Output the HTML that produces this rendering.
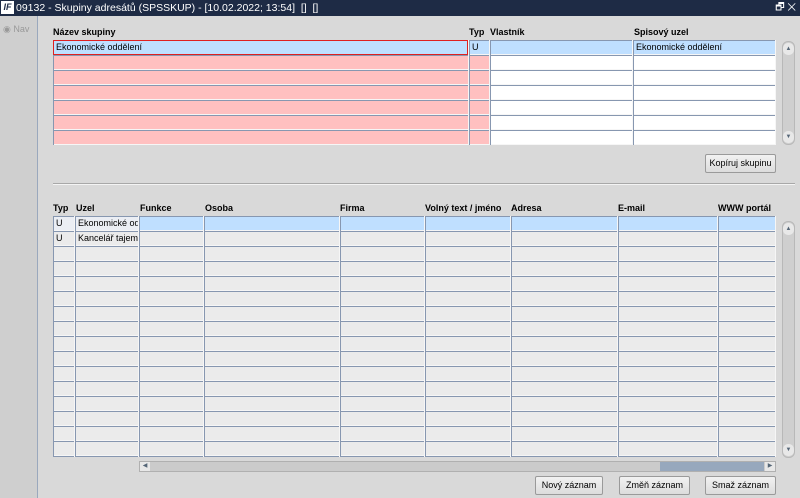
<!DOCTYPE html>
<html><head><meta charset="utf-8"><style>
*{margin:0;padding:0;box-sizing:border-box}
body{width:800px;height:498px;background:#d9d9d9;font-family:"Liberation Sans",Arial,sans-serif;font-size:9px;color:#000;position:relative;overflow:hidden}
.a{position:absolute}
#title{left:0;top:0;width:800px;height:16px;background:#1e2b45;color:#fff;font-size:10.5px;line-height:16px;padding-left:16px}
#left{left:0;top:16px;width:38px;height:482px;background:#cfcfcf;border-right:1px solid #9aa8bd}
.h{font-weight:bold;font-size:9px}
.col{background:repeating-linear-gradient(to bottom,#8797b0 0 1px,var(--f) 1px 14px,#f6f6f6 14px 15px);border-left:1px solid #8797b0;border-right:1px solid #f6f6f6}
.c1{position:absolute;left:0;top:0;right:0;height:15px;border-top:1px solid #8797b0;border-bottom:1px solid #f6f6f6;background:#bfdfff;padding-left:2px;line-height:13px;white-space:nowrap;overflow:hidden}
.btn{background:linear-gradient(#f2f2f2,#dcdcdc);border:1px solid #9a9a9a;border-radius:2px;text-align:center;line-height:17px;font-size:9px}
.vs{background:#cfcfcf;border:1px solid #b8b8b8;border-radius:6px}
.ar{position:absolute;left:0;width:11px;height:12px;background:#e8e8e8;border-radius:5px;font-size:6px;line-height:12px;text-align:center;color:#567}
</style></head><body>
<div class="a" id="title"><span class="a" style="left:1px;top:1px;width:13px;height:13px;background:#fff;color:#1e2b45;font-size:9px;font-weight:bold;font-style:italic;line-height:13px;text-align:center">IF</span>09132 - Skupiny adresátů (SPSSKUP) - [10.02.2022; 13:54]&nbsp; []&nbsp; []<span class="a" style="right:4px;top:0;font-size:10px">🗗 ✕</span></div>
<div class="a" id="left"><span class="a" style="left:3px;top:8px;color:#999;font-size:9px">◉ Nav</span></div>

<div class="a h" style="left:53px;top:27px">Název skupiny</div>
<div class="a h" style="left:469px;top:27px">Typ</div>
<div class="a h" style="left:490px;top:27px">Vlastník</div>
<div class="a h" style="left:634px;top:27px">Spisový uzel</div>

<div class="a col" style="left:53px;top:40px;width:416px;height:105px;--f:#ffc0c0"><div class="c1" style="border:1px solid #e02020;left:-1px">Ekonomické oddělení</div></div>
<div class="a col" style="left:469px;top:40px;width:21px;height:105px;--f:#ffc0c0"><div class="c1">U</div></div>
<div class="a col" style="left:490px;top:40px;width:143px;height:105px;--f:#fff"><div class="c1"></div></div>
<div class="a col" style="left:633px;top:40px;width:143px;height:105px;--f:#fff"><div class="c1">Ekonomické oddělení</div></div>
<div class="a vs" style="left:782px;top:41px;width:13px;height:104px"><div class="ar" style="top:1px">▲</div><div class="ar" style="bottom:1px">▼</div></div>

<div class="a btn" style="left:705px;top:154px;width:71px;height:19px">Kopíruj skupinu</div>
<div class="a" style="left:53px;top:183px;width:742px;height:2px;border-top:1px solid #a8a8a8;border-bottom:1px solid #f4f4f4"></div>

<div class="a h" style="left:53px;top:203px">Typ</div>
<div class="a h" style="left:76px;top:203px">Uzel</div>
<div class="a h" style="left:140px;top:203px">Funkce</div>
<div class="a h" style="left:205px;top:203px">Osoba</div>
<div class="a h" style="left:340px;top:203px">Firma</div>
<div class="a h" style="left:425px;top:203px">Volný text / jméno</div>
<div class="a h" style="left:511px;top:203px">Adresa</div>
<div class="a h" style="left:618px;top:203px">E-mail</div>
<div class="a h" style="left:718px;top:203px">WWW portál</div>

<div class="a col" style="left:53px;top:216px;width:22px;height:241px;--f:#ebebeb"><div class="c1" style="background:#ebeef4">U</div><div class="c1" style="top:15px;background:#ebebeb">U</div></div>
<div class="a col" style="left:75px;top:216px;width:64px;height:241px;--f:#ebebeb"><div class="c1" style="background:#ebeef4">Ekonomické odd</div><div class="c1" style="top:15px;background:#ebebeb">Kancelář tajemn</div></div>
<div class="a col" style="left:139px;top:216px;width:65px;height:241px;--f:#ebebeb"><div class="c1"></div></div>
<div class="a col" style="left:204px;top:216px;width:136px;height:241px;--f:#ebebeb"><div class="c1"></div></div>
<div class="a col" style="left:340px;top:216px;width:85px;height:241px;--f:#ebebeb"><div class="c1"></div></div>
<div class="a col" style="left:425px;top:216px;width:86px;height:241px;--f:#ebebeb"><div class="c1"></div></div>
<div class="a col" style="left:511px;top:216px;width:107px;height:241px;--f:#ebebeb"><div class="c1"></div></div>
<div class="a col" style="left:618px;top:216px;width:100px;height:241px;--f:#ebebeb"><div class="c1"></div></div>
<div class="a col" style="left:718px;top:216px;width:58px;height:241px;--f:#ebebeb"><div class="c1"></div></div>
<div class="a vs" style="left:782px;top:221px;width:13px;height:237px"><div class="ar" style="top:1px">▲</div><div class="ar" style="bottom:1px">▼</div></div>

<div class="a" style="left:139px;top:461px;width:637px;height:11px;background:#cbcbcb;border:1px solid #b0b0b0"><div class="a" style="left:0;top:0;width:10px;height:9px;background:#e8e8e8;font-size:6px;line-height:9px;text-align:center;color:#567">◀</div><div class="a" style="left:520px;top:0;width:104px;height:9px;background:#97a8bd"></div><div class="a" style="right:0;top:0;width:10px;height:9px;background:#e8e8e8;font-size:6px;line-height:9px;text-align:center;color:#567">▶</div></div>

<div class="a btn" style="left:535px;top:476px;width:68px;height:19px">Nový záznam</div>
<div class="a btn" style="left:619px;top:476px;width:71px;height:19px">Změň záznam</div>
<div class="a btn" style="left:705px;top:476px;width:71px;height:19px">Smaž záznam</div>
</body></html>
